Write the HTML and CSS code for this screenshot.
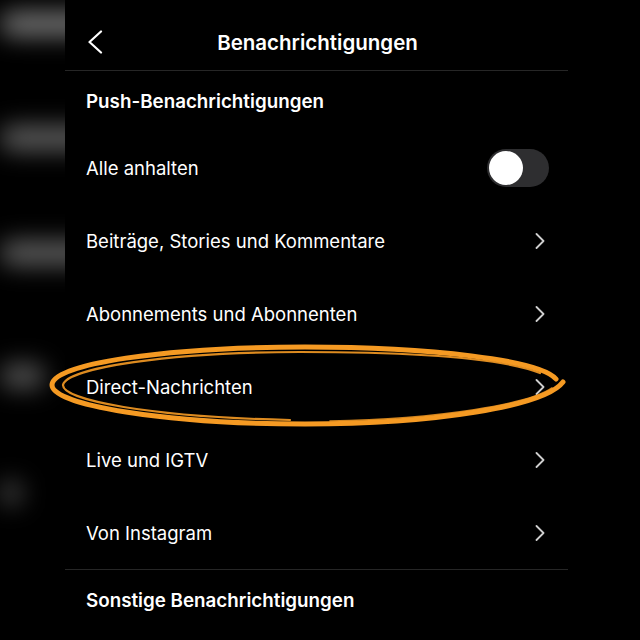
FILE: index.html
```html
<!DOCTYPE html>
<html lang="de">
<head>
<meta charset="utf-8">
<title>Benachrichtigungen</title>
<link rel="stylesheet" href="styles.css">
</head>
<body>
<div class="screen">
  <div class="side">
    <div class="blur b1"></div>
    <div class="blur b2"></div>
    <div class="blur b3"></div>
    <div class="blur b4"></div>
    <div class="blur b5"></div>
  </div>
  <main class="panel">
    <header class="topbar">
      <svg class="back" width="16" height="24" viewBox="0 0 16 24"><path d="M14 1.5 L2.5 12 L14 22.5" fill="none" stroke="#fff" stroke-width="2.2" stroke-linecap="round" stroke-linejoin="round"/></svg>
      <h1 class="title">Benachrichtigungen</h1>
    </header>
    <h2 class="section">Push-Benachrichtigungen</h2>
    <div class="row">
      <span class="label">Alle anhalten</span>
      <span class="toggle"><span class="knob"></span></span>
    </div>
    <div class="row">
      <span class="label">Beiträge, Stories und Kommentare</span>
      <svg class="chev" width="10" height="16" viewBox="0 0 10 16"><path d="M1.5 1 L8.5 8 L1.5 15" fill="none" stroke="#cfcfcf" stroke-width="1.8" stroke-linecap="round" stroke-linejoin="round"/></svg>
    </div>
    <div class="row">
      <span class="label">Abonnements und Abonnenten</span>
      <svg class="chev" width="10" height="16" viewBox="0 0 10 16"><path d="M1.5 1 L8.5 8 L1.5 15" fill="none" stroke="#cfcfcf" stroke-width="1.8" stroke-linecap="round" stroke-linejoin="round"/></svg>
    </div>
    <div class="row">
      <span class="label">Direct-Nachrichten</span>
      <svg class="chev" width="10" height="16" viewBox="0 0 10 16"><path d="M1.5 1 L8.5 8 L1.5 15" fill="none" stroke="#cfcfcf" stroke-width="1.8" stroke-linecap="round" stroke-linejoin="round"/></svg>
    </div>
    <div class="row">
      <span class="label">Live und IGTV</span>
      <svg class="chev" width="10" height="16" viewBox="0 0 10 16"><path d="M1.5 1 L8.5 8 L1.5 15" fill="none" stroke="#cfcfcf" stroke-width="1.8" stroke-linecap="round" stroke-linejoin="round"/></svg>
    </div>
    <div class="row">
      <span class="label">Von Instagram</span>
      <svg class="chev" width="10" height="16" viewBox="0 0 10 16"><path d="M1.5 1 L8.5 8 L1.5 15" fill="none" stroke="#cfcfcf" stroke-width="1.8" stroke-linecap="round" stroke-linejoin="round"/></svg>
    </div>
    <h2 class="section section-bottom">Sonstige Benachrichtigungen</h2>
  </main>
  <div class="rest"></div>
  <svg class="circle" width="640" height="640" viewBox="0 0 640 640">
    <g fill="none" stroke="#f59a23" stroke-linecap="round">
      <path d="M556 379 C540 360 430 347 305 347 C165 347 52 364 52 385 C52 405 165 424 305 424 C435 424 545 406 563 382" stroke-width="5"/>
      <path d="M540 373 C500 357 410 352 300 352 C170 352 66 368 63 385 C62 400 150 417 290 420" stroke-width="2.2" opacity="0.9"/>
      <path d="M330 421 C440 419 530 404 552 388" stroke-width="1.6" opacity="0.85"/>
    </g>
  </svg>
</div>
</body>
</html>
```
FILE: styles.css
```css
* { box-sizing: border-box; }
html, body { margin: 0; padding: 0; background: #000; }
body {
  font-family: Inter, "Noto Sans", "Liberation Sans", sans-serif;
  color: #fff;
}
.screen {
  position: relative;
  width: 640px;
  height: 640px;
  overflow: hidden;
  display: flex;
  background: #000;
}
.side {
  width: 65px;
  flex: none;
  display: flex;
  flex-direction: column;
  overflow: hidden;
}
.blur {
  height: 24px;
  background: #5a5a5a;
  filter: blur(12px);
  border-radius: 12px;
}
.b1 { margin-top: 12px; width: 100px; background: #767676; }
.b2 { margin-top: 90px; width: 100px; background: #606060; }
.b3 { margin-top: 91px; width: 100px; background: #606060; }
.b4 { margin-top: 99px; width: 45px; background: #555; }
.b5 { margin-top: 93px; width: 22px; background: #4a4a4a; }
.panel {
  width: 503px;
  flex: none;
  display: flex;
  flex-direction: column;
}
.rest { flex: 1; }
.topbar {
  position: relative;
  height: 71px;
  border-bottom: 1px solid #262626;
  display: flex;
  align-items: center;
  justify-content: center;
}
.back {
  position: absolute;
  left: 22px;
  top: 30px;
}
.title {
  margin: 15px 0 0 2px;
  font-size: 20.5px;
  font-weight: 600;
  letter-spacing: 0;
}
.section {
  margin: 0;
  height: 60px;
  display: flex;
  align-items: center;
  padding-left: 21px;
  font-size: 18.8px;
  font-weight: 600;
}
.section-bottom {
  border-top: 1px solid #262626;
  height: 61px;
}
.row {
  height: 73px;
  display: flex;
  align-items: center;
  justify-content: space-between;
  padding-left: 21px;
  padding-right: 23px;
}
.label {
  font-size: 18.5px;
  font-weight: 400;
}
.toggle {
  width: 62px;
  height: 38px;
  margin-right: -4px;
  border-radius: 19px;
  background: #2e2e30;
  padding: 2px;
  display: flex;
}
.knob {
  width: 34px;
  height: 34px;
  border-radius: 50%;
  background: #fff;
}
.circle {
  position: absolute;
  left: 0;
  top: 0;
  pointer-events: none;
}
```
